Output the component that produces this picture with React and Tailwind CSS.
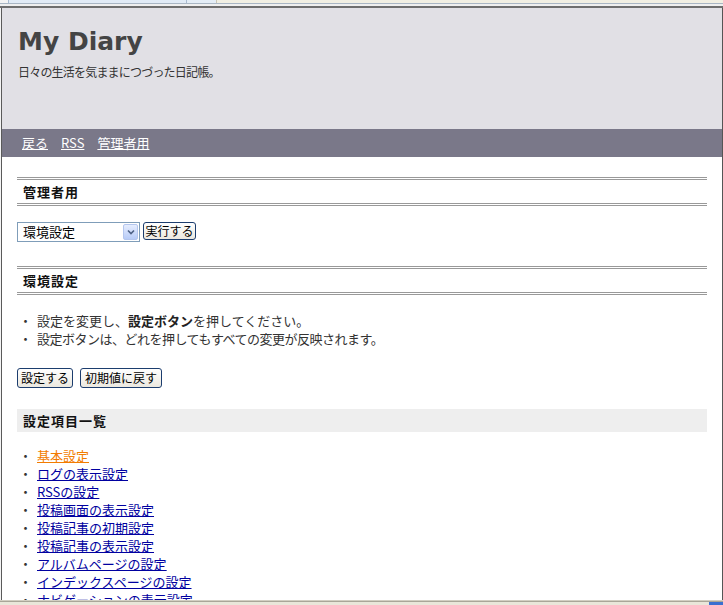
export default function App() {
  const items = [
    "基本設定",
    "ログの表示設定",
    "RSSの設定",
    "投稿画面の表示設定",
    "投稿記事の初期設定",
    "投稿記事の表示設定",
    "アルバムページの設定",
    "インデックスページの設定",
    "ナビゲーションの表示設定",
  ];
  return (
    <div className="w-[723px] h-[605px] overflow-hidden flex flex-col bg-white font-['Noto_Sans_CJK_JP',sans-serif]">
      {/* browser chrome top */}
      <div className="h-[8px] flex flex-col shrink-0">
        <div className="h-[3px] flex bg-[#f1efe3]">
          <div className="w-[8px] bg-[#f4f4f4]" />
          <div className="w-[178px] bg-[#e1ebf6] border-l border-[#a9bbd0]" />
          <div className="w-[30px] bg-[#e4edf6] border-l border-[#a9bbd0]" />
          <div className="flex-1 border-l border-[#c9c6b6]" />
        </div>
        <div className="h-[1px] bg-[#a9b6c4]" />
        <div className="h-[2px] bg-[#efefef]" />
        <div className="h-[2px] bg-[#6e6e6e]" />
      </div>

      <div className="flex-1 flex min-h-0">
        <div className="w-[1px] bg-[#f4f4f4]" />
        <div className="w-[1px] bg-[#5a5a5a]" />
        <div className="flex-1 min-w-0 overflow-hidden">
          {/* header */}
          <div className="h-[121px] bg-[#e1e0e5] pt-[19px] pl-[16px]">
            <div className="font-['DejaVu_Sans',sans-serif] text-[25px] leading-[30px] font-bold text-[#444]">
              My Diary
            </div>
            <div className="mt-[7px] text-[12px] leading-[16px] tracking-[-0.8px] text-[#333]">
              日々の生活を気ままにつづった日記帳。
            </div>
          </div>
          {/* nav */}
          <div className="h-[28px] bg-[#7a7889] flex items-center pl-[20px] gap-[13px] text-[13px] text-white">
            <a className="underline">戻る</a>
            <a className="underline">RSS</a>
            <a className="underline">管理者用</a>
          </div>

          {/* content */}
          <div className="px-[15px] pt-[20px]">
            <div className="border-y-[3px] border-double border-[#999] h-[29px] pl-[6px] flex items-center text-[13px] font-bold text-[#111] tracking-[1px]">
              管理者用
            </div>

            <div className="mt-[16px] flex items-start gap-[3px]">
              <div className="w-[123px] h-[20px] border border-[#7f9db9] flex items-center justify-between pl-[5px] pr-[1px] text-[13px] text-black">
                <span>環境設定</span>
                <div className="w-[15px] h-[16px] rounded-[2px] border border-[#b4c6ee] bg-gradient-to-b from-[#e6edfe] to-[#b7cbf7] flex items-center justify-center">
                  <svg width="8" height="6" viewBox="0 0 8 6">
                    <path d="M1 1.5 L4 4.5 L7 1.5" fill="none" stroke="#4d6185" strokeWidth="1.6" />
                  </svg>
                </div>
              </div>
              <button className="w-[53px] h-[18px] border border-[#1c3d6e] rounded-[3px] bg-gradient-to-b from-white to-[#ebe8df] text-[12px] leading-none flex items-center justify-center text-black">
                実行する
              </button>
            </div>

            <div className="mt-[24px] border-y-[3px] border-double border-[#999] h-[29px] pl-[6px] flex items-center text-[13px] font-bold text-[#111] tracking-[1px]">
              環境設定
            </div>

            <div className="mt-[17px] text-[13px] leading-[18px] text-[#333]">
              <div className="flex">
                <span className="w-[20px] pl-[2px] shrink-0">・</span>
                <span>
                  設定を変更し、<b className="text-[#222]">設定ボタン</b>を押してください。
                </span>
              </div>
              <div className="flex">
                <span className="w-[20px] pl-[2px] shrink-0">・</span>
                <span className="tracking-[-0.5px]">設定ボタンは、どれを押してもすべての変更が反映されます。</span>
              </div>
            </div>

            <div className="mt-[20px] flex gap-[7px]">
              <button className="w-[56px] h-[20px] border border-[#1c3d6e] rounded-[3px] bg-gradient-to-b from-white to-[#ebe8df] text-[12px] leading-none flex items-center justify-center text-black">
                設定する
              </button>
              <button className="w-[82px] h-[20px] border border-[#1c3d6e] rounded-[3px] bg-gradient-to-b from-white to-[#ebe8df] text-[12px] leading-none flex items-center justify-center text-black">
                初期値に戻す
              </button>
            </div>

            <div className="mt-[21px] h-[23px] bg-[#eeeeee] pl-[6px] flex items-center text-[13px] font-bold text-[#111] tracking-[1px]">
              設定項目一覧
            </div>

            <ul className="mt-[15px] text-[13px] leading-[18px]">
              {items.map((t, i) => (
                <li key={t} className="flex">
                  <span className="w-[20px] pl-[2px] shrink-0 text-[#333]">・</span>
                  <a className={i === 0 ? "underline text-[#f27c00]" : "underline text-[#0000a0]"}>{t}</a>
                </li>
              ))}
            </ul>
          </div>
        </div>
        <div className="w-[1px] bg-[#555]" />
      </div>

      {/* browser chrome bottom */}
      <div className="h-[5px] flex flex-col shrink-0">
        <div className="h-[1px] bg-[#d2cfc2]" />
        <div className="h-[1px] bg-[#a9a698]" />
        <div className="h-[3px] flex bg-[#e9e6d9]">
          <div className="flex-1" />
          <div className="w-[14px] bg-[#3a6fd0]" />
        </div>
      </div>
    </div>
  );
}
